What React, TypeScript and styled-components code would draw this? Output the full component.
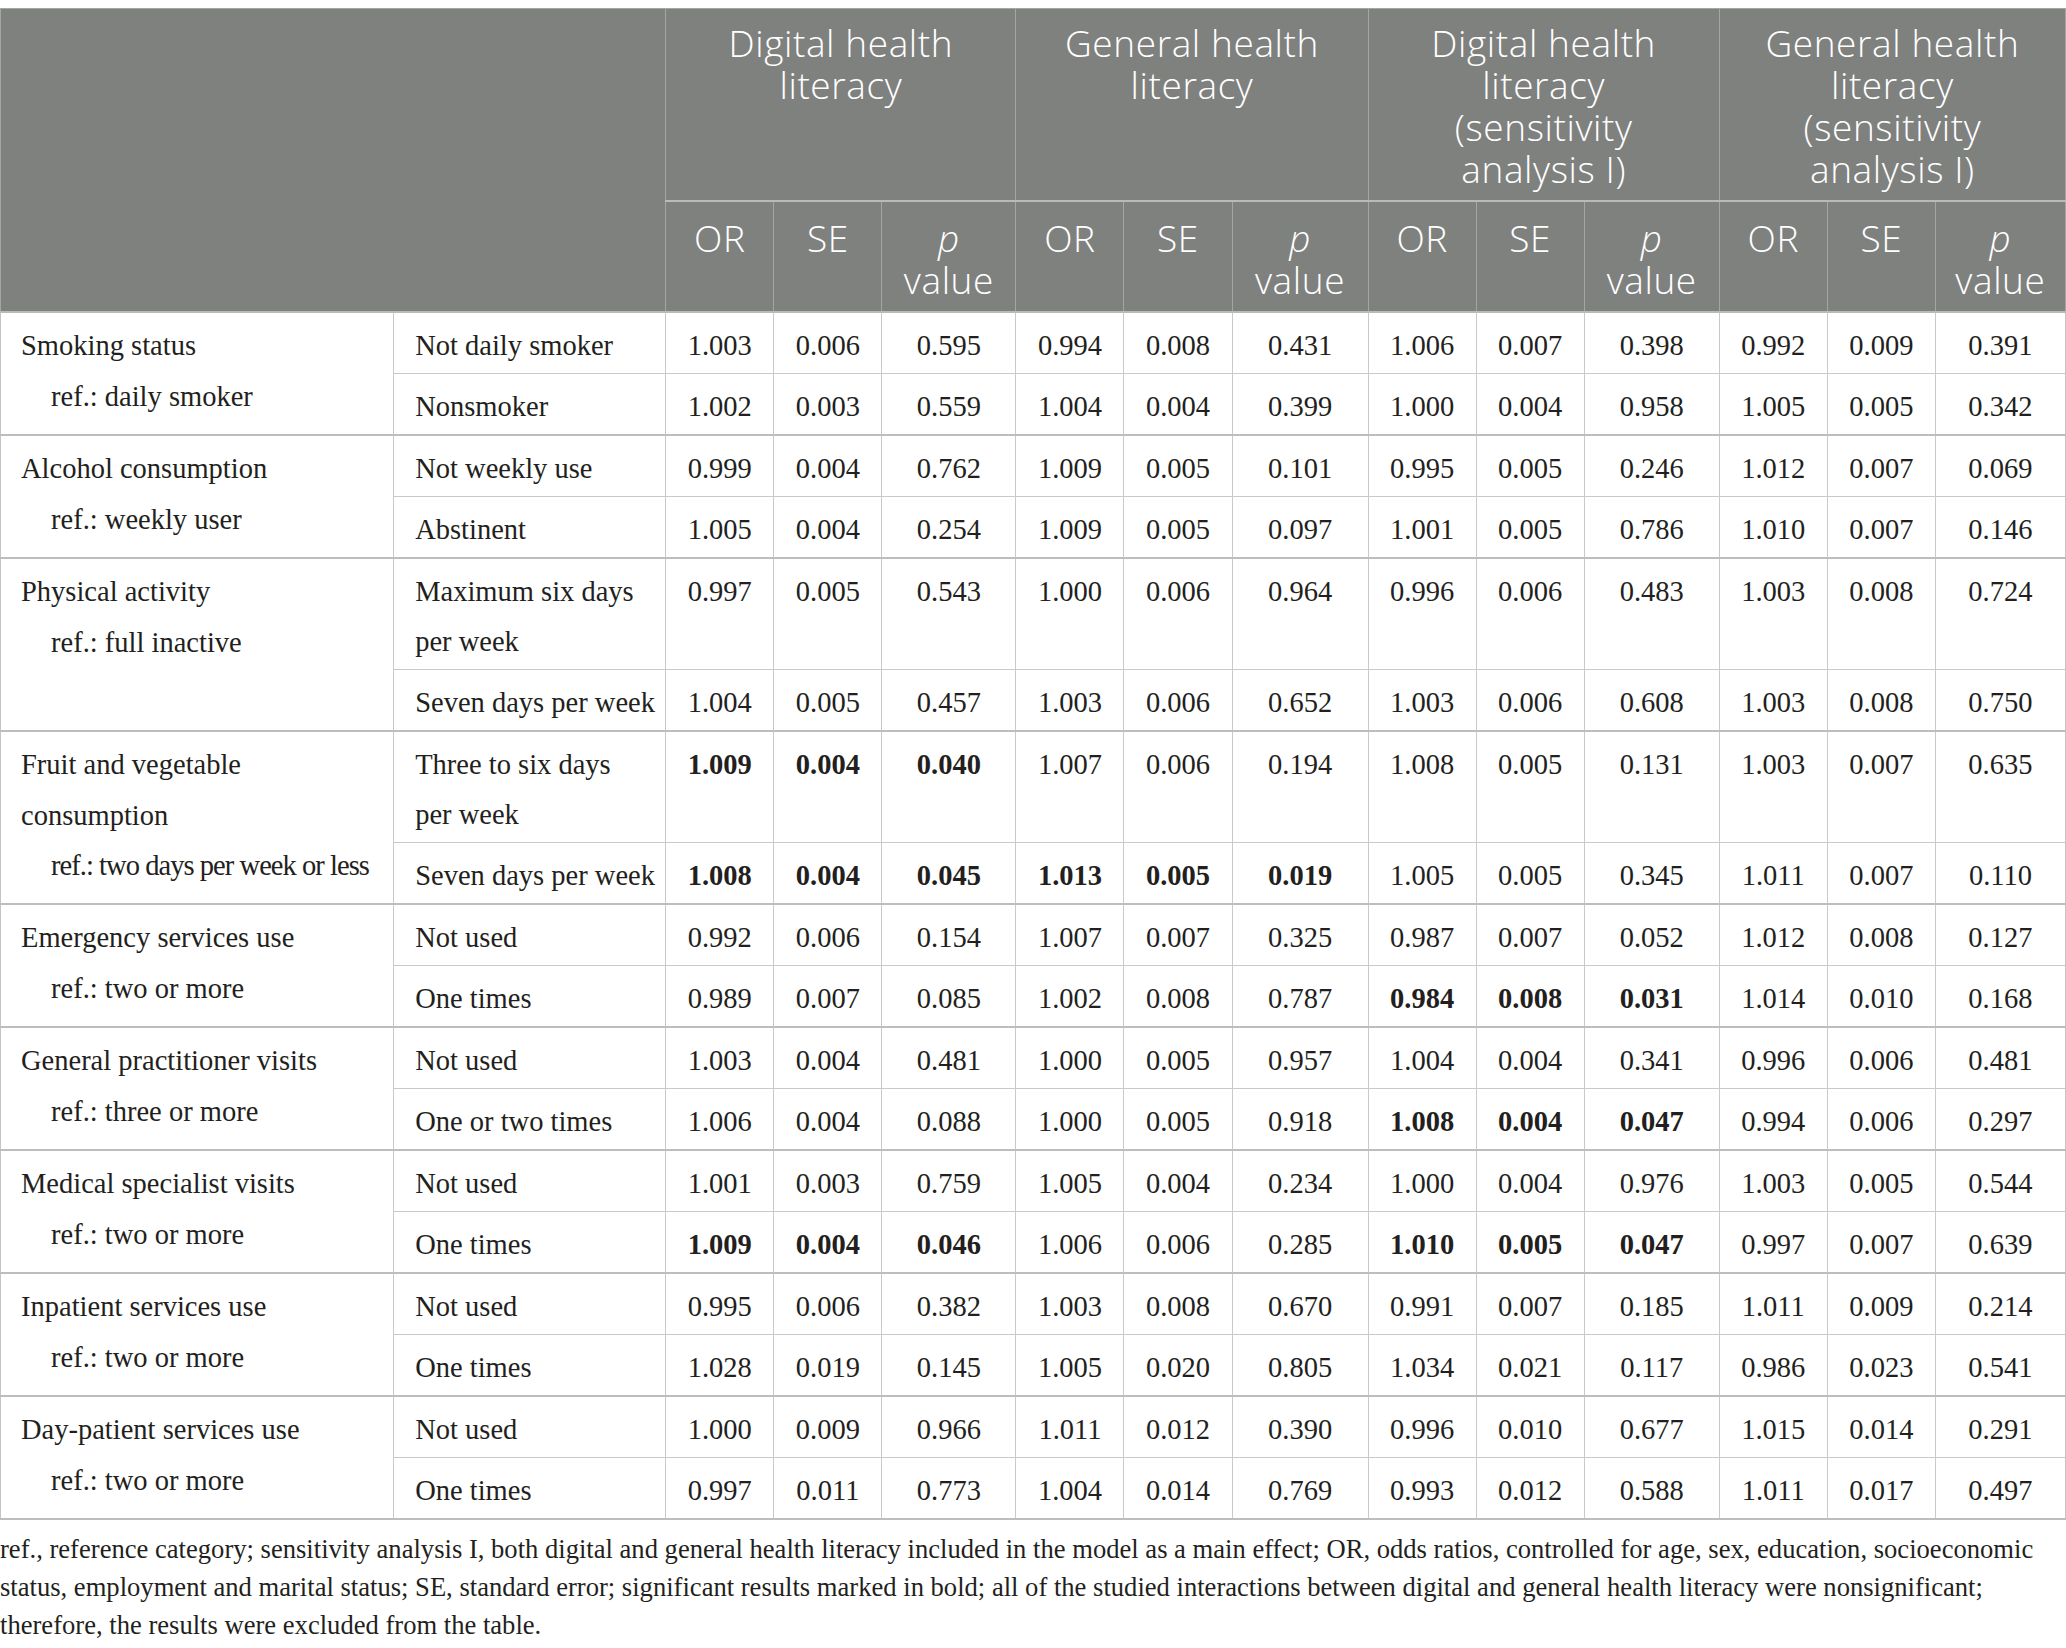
import React from 'react';
import styled, { createGlobalStyle } from 'styled-components';

const GlobalStyle = createGlobalStyle`
  html, body { margin: 0; padding: 0; background: #ffffff; }
  body { font-family: "Liberation Serif", "Times New Roman", serif; color: #231f20; }
`;

const Page = styled.div`
  width: 2066px;
  padding-top: 8px;
`;

const Table = styled.table`
  width: 2066px;
  table-layout: fixed;
  border-collapse: collapse;
  border-top: 1px solid #bfc0bf;
`;

const HeadCell = styled.th<{ $pt: number; $pb: number }>`
  background: #7f817f;
  color: #ffffff;
  font-family: "Open Sans", "Liberation Sans", sans-serif;
  font-weight: 300;
  font-size: 37px;
  letter-spacing: 0.6px;
  line-height: 42px;
  text-align: center;
  vertical-align: top;
  padding: ${(p) => p.$pt}px 4px ${(p) => p.$pb}px;
  border: 1px solid #a4a6a4;
  border-bottom: 2px solid #b9bab9;
`;

const Italic = styled.span`
  font-style: italic;
`;

const Line = styled.span`
  display: block;
  white-space: nowrap;
`;

const Row = styled.tr<{ $first: boolean }>`
  & > td {
    border-top: ${(p) => (p.$first ? '2px solid #bdbdbd' : '1px solid #c9c9c9')};
  }
`;

const CategoryCell = styled.td`
  vertical-align: top;
  padding: 8px 8px 2px 20px;
  font-size: 28.5px;
  line-height: 50.5px;
  border-left: 1px solid #c4c4c4;
  border-right: 1px solid #c9c9c9;
  border-bottom: 2px solid #bdbdbd;
`;

const RefLine = styled.span<{ $tight?: boolean }>`
  display: block;
  white-space: nowrap;
  padding-left: 30px;
  letter-spacing: ${(p) => (p.$tight ? '-0.95px' : '0')};
`;

const LabelCell = styled.td`
  vertical-align: top;
  padding: 8px 4px 2px 21px;
  font-size: 28.5px;
  line-height: 50px;
  border-right: 1px solid #c9c9c9;
`;

const NumCell = styled.td<{ $bold: boolean; $last: boolean }>`
  vertical-align: top;
  text-align: center;
  padding: 8px 2px 2px;
  font-size: 28.5px;
  line-height: 50px;
  font-weight: ${(p) => (p.$bold ? 700 : 400)};
  border-right: 1px solid ${(p) => (p.$last ? '#c4c4c4' : '#c9c9c9')};
`;

const Body = styled.tbody`
  & > tr:last-child > td {
    border-bottom: 2px solid #bdbdbd;
  }
`;

const Footnote = styled.p`
  margin: 10px 0 0 0;
  width: 2060px;
  font-size: 26.6px;
  line-height: 38px;
  color: #231f20;
`;

type RowData = { label: string[]; vals: string[] };
type Group = { title: string[]; ref: string; tight?: boolean; rows: RowData[] };

const groups: Group[] = [
  {
    title: ['Smoking status'],
    ref: 'ref.: daily smoker',
    rows: [
      { label: ['Not daily smoker'], vals: '1.003 0.006 0.595 0.994 0.008 0.431 1.006 0.007 0.398 0.992 0.009 0.391'.split(' ') },
      { label: ['Nonsmoker'], vals: '1.002 0.003 0.559 1.004 0.004 0.399 1.000 0.004 0.958 1.005 0.005 0.342'.split(' ') },
    ],
  },
  {
    title: ['Alcohol consumption'],
    ref: 'ref.: weekly user',
    rows: [
      { label: ['Not weekly use'], vals: '0.999 0.004 0.762 1.009 0.005 0.101 0.995 0.005 0.246 1.012 0.007 0.069'.split(' ') },
      { label: ['Abstinent'], vals: '1.005 0.004 0.254 1.009 0.005 0.097 1.001 0.005 0.786 1.010 0.007 0.146'.split(' ') },
    ],
  },
  {
    title: ['Physical activity'],
    ref: 'ref.: full inactive',
    rows: [
      { label: ['Maximum six days', 'per week'], vals: '0.997 0.005 0.543 1.000 0.006 0.964 0.996 0.006 0.483 1.003 0.008 0.724'.split(' ') },
      { label: ['Seven days per week'], vals: '1.004 0.005 0.457 1.003 0.006 0.652 1.003 0.006 0.608 1.003 0.008 0.750'.split(' ') },
    ],
  },
  {
    title: ['Fruit and vegetable', 'consumption'],
    ref: 'ref.: two days per week or less',
    tight: true,
    rows: [
      { label: ['Three to six days', 'per week'], vals: '*1.009 *0.004 *0.040 1.007 0.006 0.194 1.008 0.005 0.131 1.003 0.007 0.635'.split(' ') },
      { label: ['Seven days per week'], vals: '*1.008 *0.004 *0.045 *1.013 *0.005 *0.019 1.005 0.005 0.345 1.011 0.007 0.110'.split(' ') },
    ],
  },
  {
    title: ['Emergency services use'],
    ref: 'ref.: two or more',
    rows: [
      { label: ['Not used'], vals: '0.992 0.006 0.154 1.007 0.007 0.325 0.987 0.007 0.052 1.012 0.008 0.127'.split(' ') },
      { label: ['One times'], vals: '0.989 0.007 0.085 1.002 0.008 0.787 *0.984 *0.008 *0.031 1.014 0.010 0.168'.split(' ') },
    ],
  },
  {
    title: ['General practitioner visits'],
    ref: 'ref.: three or more',
    rows: [
      { label: ['Not used'], vals: '1.003 0.004 0.481 1.000 0.005 0.957 1.004 0.004 0.341 0.996 0.006 0.481'.split(' ') },
      { label: ['One or two times'], vals: '1.006 0.004 0.088 1.000 0.005 0.918 *1.008 *0.004 *0.047 0.994 0.006 0.297'.split(' ') },
    ],
  },
  {
    title: ['Medical specialist visits'],
    ref: 'ref.: two or more',
    rows: [
      { label: ['Not used'], vals: '1.001 0.003 0.759 1.005 0.004 0.234 1.000 0.004 0.976 1.003 0.005 0.544'.split(' ') },
      { label: ['One times'], vals: '*1.009 *0.004 *0.046 1.006 0.006 0.285 *1.010 *0.005 *0.047 0.997 0.007 0.639'.split(' ') },
    ],
  },
  {
    title: ['Inpatient services use'],
    ref: 'ref.: two or more',
    rows: [
      { label: ['Not used'], vals: '0.995 0.006 0.382 1.003 0.008 0.670 0.991 0.007 0.185 1.011 0.009 0.214'.split(' ') },
      { label: ['One times'], vals: '1.028 0.019 0.145 1.005 0.020 0.805 1.034 0.021 0.117 0.986 0.023 0.541'.split(' ') },
    ],
  },
  {
    title: ['Day-patient services use'],
    ref: 'ref.: two or more',
    rows: [
      { label: ['Not used'], vals: '1.000 0.009 0.966 1.011 0.012 0.390 0.996 0.010 0.677 1.015 0.014 0.291'.split(' ') },
      { label: ['One times'], vals: '0.997 0.011 0.773 1.004 0.014 0.769 0.993 0.012 0.588 1.011 0.017 0.497'.split(' ') },
    ],
  },
];

const headerGroups: string[][] = [
  ['Digital health', 'literacy'],
  ['General health', 'literacy'],
  ['Digital health', 'literacy', '(sensitivity', 'analysis I)'],
  ['General health', 'literacy', '(sensitivity', 'analysis I)'],
];

const colWidths = [393, 272, 108, 108, 134, 108, 108, 136, 108, 108, 135, 108, 108, 130];

export default function App() {
  return (
    <Page>
      <GlobalStyle />
      <Table>
        <colgroup>
          {colWidths.map((w, i) => (
            <col key={i} style={{ width: w }} />
          ))}
        </colgroup>
        <thead>
          <tr>
            <HeadCell $pt={13} $pb={10} colSpan={2} rowSpan={2} />
            {headerGroups.map((g, i) => (
              <HeadCell key={i} $pt={13} $pb={10} colSpan={3}>
                {g.map((l, j) => (
                  <Line key={j}>{l}</Line>
                ))}
              </HeadCell>
            ))}
          </tr>
          <tr>
            {headerGroups.map((_, i) => (
              <React.Fragment key={i}>
                <HeadCell $pt={15} $pb={10}>OR</HeadCell>
                <HeadCell $pt={15} $pb={10}>SE</HeadCell>
                <HeadCell $pt={15} $pb={10}>
                  <Line>
                    <Italic>p</Italic>
                  </Line>
                  <Line>value</Line>
                </HeadCell>
              </React.Fragment>
            ))}
          </tr>
        </thead>
        <Body>
          {groups.map((g, gi) =>
            g.rows.map((r, ri) => (
              <Row key={`${gi}-${ri}`} $first={ri === 0}>
                {ri === 0 && (
                  <CategoryCell rowSpan={g.rows.length}>
                    {g.title.map((t, ti) => (
                      <Line key={ti}>{t}</Line>
                    ))}
                    <RefLine $tight={g.tight}>{g.ref}</RefLine>
                  </CategoryCell>
                )}
                <LabelCell>
                  {r.label.map((l, li) => (
                    <Line key={li}>{l}</Line>
                  ))}
                </LabelCell>
                {r.vals.map((v, vi) => (
                  <NumCell key={vi} $bold={v.startsWith('*')} $last={vi === r.vals.length - 1}>
                    {v.replace('*', '')}
                  </NumCell>
                ))}
              </Row>
            ))
          )}
        </Body>
      </Table>
      <Footnote>
        ref., reference category; sensitivity analysis I, both digital and general health literacy included in the model as a
        main effect; OR, odds ratios, controlled for age, sex, education, socioeconomic status, employment and marital status;
        SE, standard error; significant results marked in bold; all of the studied interactions between digital and general
        health literacy were nonsignificant; therefore, the results were excluded from the table.
      </Footnote>
    </Page>
  );
}
